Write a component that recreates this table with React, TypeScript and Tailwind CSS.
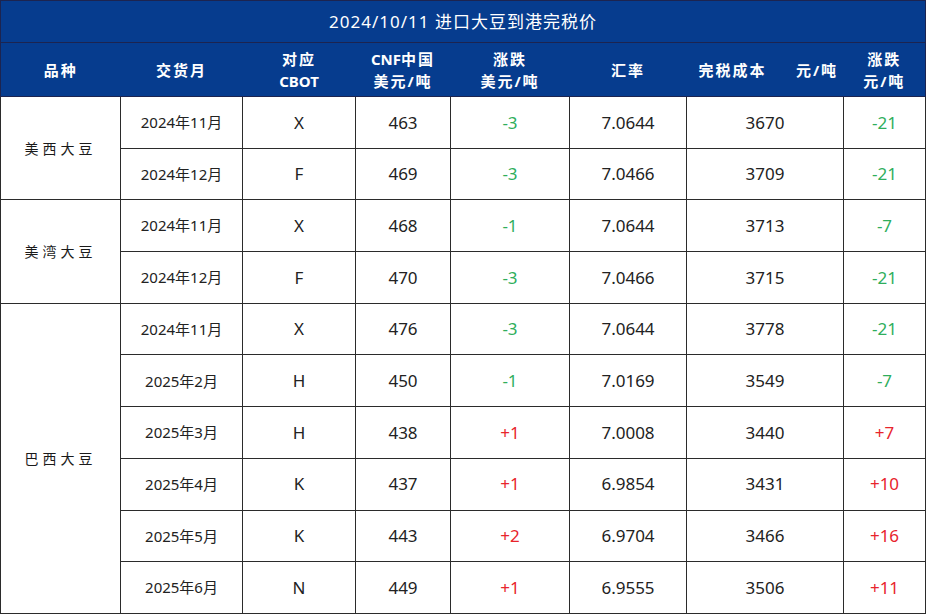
import React from "react";

interface Row {
    month: string;
    cbot: string;
    cnf: number;
    chgUsd: string;
    rate: string;
    cost: number;
    chgCny: string;
}

const groups: { name: string; rows: Row[] }[] = [
    {
        name: "美西大豆",
        rows: [
            { month: "2024年11月", cbot: "X", cnf: 463, chgUsd: "-3", rate: "7.0644", cost: 3670, chgCny: "-21" },
            { month: "2024年12月", cbot: "F", cnf: 469, chgUsd: "-3", rate: "7.0466", cost: 3709, chgCny: "-21" },
        ],
    },
    {
        name: "美湾大豆",
        rows: [
            { month: "2024年11月", cbot: "X", cnf: 468, chgUsd: "-1", rate: "7.0644", cost: 3713, chgCny: "-7" },
            { month: "2024年12月", cbot: "F", cnf: 470, chgUsd: "-3", rate: "7.0466", cost: 3715, chgCny: "-21" },
        ],
    },
    {
        name: "巴西大豆",
        rows: [
            { month: "2024年11月", cbot: "X", cnf: 476, chgUsd: "-3", rate: "7.0644", cost: 3778, chgCny: "-21" },
            { month: "2025年2月", cbot: "H", cnf: 450, chgUsd: "-1", rate: "7.0169", cost: 3549, chgCny: "-7" },
            { month: "2025年3月", cbot: "H", cnf: 438, chgUsd: "+1", rate: "7.0008", cost: 3440, chgCny: "+7" },
            { month: "2025年4月", cbot: "K", cnf: 437, chgUsd: "+1", rate: "6.9854", cost: 3431, chgCny: "+10" },
            { month: "2025年5月", cbot: "K", cnf: 443, chgUsd: "+2", rate: "6.9704", cost: 3466, chgCny: "+16" },
            { month: "2025年6月", cbot: "N", cnf: 449, chgUsd: "+1", rate: "6.9555", cost: 3506, chgCny: "+11" },
        ],
    },
];

const chgColor = (v: string) => (v.startsWith("+") ? "text-[#e8242c]" : "text-[#2fae5c]");

const cell = "border border-[#2b2b2b] text-center align-middle";

export default function App() {
    return (
        <div
            className="w-[926px] h-[615px] bg-white"
            style={{ fontFamily: '"Noto Sans", "Noto Sans CJK SC", sans-serif' }}
        >
            <table className="w-[925px] table-fixed border-collapse text-[#222]">
                <colgroup>
                    <col className="w-[120px]" />
                    <col className="w-[122px]" />
                    <col className="w-[113px]" />
                    <col className="w-[95px]" />
                    <col className="w-[119px]" />
                    <col className="w-[117px]" />
                    <col className="w-[84px]" />
                    <col className="w-[73px]" />
                    <col className="w-[82px]" />
                </colgroup>
                <thead>
                    <tr className="h-[42px] bg-[#063c8e]">
                        <th
                            colSpan={9}
                            className="border border-[#1c2450] text-[17px] font-normal text-white tracking-[1px]"
                        >
                            2024/10/11 进口大豆到港完税价
                        </th>
                    </tr>
                    <tr className="h-[54px] bg-[#063c8e] text-white text-[15px] font-bold leading-[22px] tracking-[2px]">
                        <th className="border-l border-b border-[#1c2450]">品种</th>
                        <th className="border-b border-[#1c2450]">交货月</th>
                        <th className="border-b border-[#1c2450]">对应<br /><span className="tracking-normal">CBOT</span></th>
                        <th className="border-b border-[#1c2450]"><span className="tracking-normal">CNF</span>中国<br />美元/吨</th>
                        <th className="border-b border-[#1c2450]">涨跌<br />美元/吨</th>
                        <th className="border-b border-[#1c2450]">汇率</th>
                        <th className="border-b border-[#1c2450] pl-2">完税成本</th>
                        <th className="border-b border-[#1c2450] pl-5">元/吨</th>
                        <th className="border-b border-r border-[#1c2450]">涨跌<br />元/吨</th>
                    </tr>
                </thead>
                <tbody>
                    {groups.map((g) =>
                        g.rows.map((r, i) => (
                            <tr key={g.name + i} className="h-[51.7px]">
                                {i === 0 && (
                                    <td rowSpan={g.rows.length} className={`${cell} text-[14px] tracking-[4px] text-[#1a1a1a]`}>
                                        {g.name}
                                    </td>
                                )}
                                <td className={`${cell} text-[15px]`}>{r.month}</td>
                                <td className={`${cell} text-[17px]`}>{r.cbot}</td>
                                <td className={`${cell} text-[17px]`}>{r.cnf}</td>
                                <td className={`${cell} text-[17px] ${chgColor(r.chgUsd)}`}>{r.chgUsd}</td>
                                <td className={`${cell} text-[17px]`}>{r.rate}</td>
                                <td colSpan={2} className={`${cell} text-[17px]`}>{r.cost}</td>
                                <td className={`${cell} text-[17px] ${chgColor(r.chgCny)}`}>{r.chgCny}</td>
                            </tr>
                        ))
                    )}
                </tbody>
            </table>
        </div>
    );
}
